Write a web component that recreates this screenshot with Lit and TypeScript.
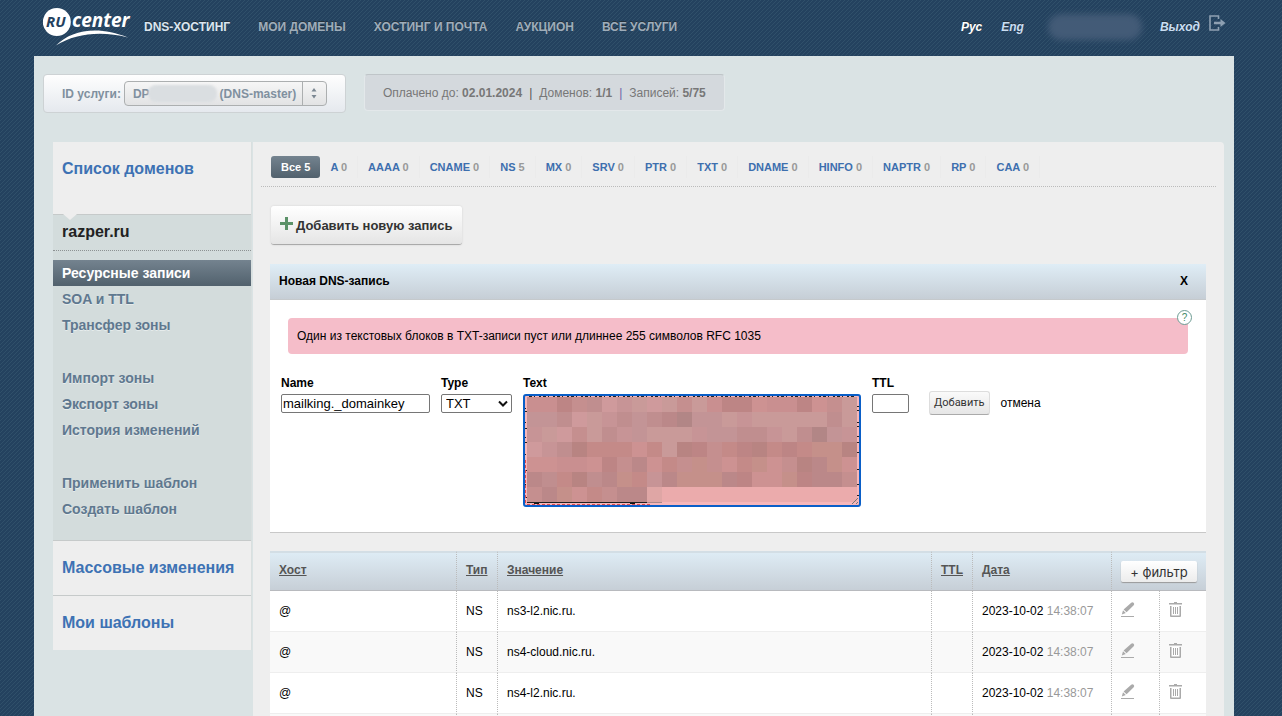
import { LitElement, html, css, svg } from "lit";
import { customElement, state } from "lit/decorators.js";
import { classMap } from "lit/directives/class-map.js";

const NAV = ["DNS-ХОСТИНГ", "МОИ ДОМЕНЫ", "ХОСТИНГ И ПОЧТА", "АУКЦИОН", "ВСЕ УСЛУГИ"];

const TABS: [string, number][] = [
  ["Все", 5], ["A", 0], ["AAAA", 0], ["CNAME", 0], ["NS", 5], ["MX", 0], ["SRV", 0], ["PTR", 0],
  ["TXT", 0], ["DNAME", 0], ["HINFO", 0], ["NAPTR", 0], ["RP", 0], ["CAA", 0],
];

const ZONE_MENU = [
  ["Ресурсные записи", "SOA и TTL", "Трансфер зоны"],
  ["Импорт зоны", "Экспорт зоны", "История изменений"],
  ["Применить шаблон", "Создать шаблон"],
];

const RECORDS = [
  { host: "@", type: "NS", value: "ns3-l2.nic.ru.", date: "2023-10-02", time: "14:38:07" },
  { host: "@", type: "NS", value: "ns4-cloud.nic.ru.", date: "2023-10-02", time: "14:38:07" },
  { host: "@", type: "NS", value: "ns4-l2.nic.ru.", date: "2023-10-02", time: "14:38:07" },
];

// Privacy mosaic over the key: each letter is a tone, each row is 15px high.
const TONES: Record<string, string> = {
  a: "#c98f90", b: "#bd8585", c: "#c58f8f", d: "#c08e8f", e: "#cf9a9c", f: "#c79496",
  g: "#c99a99", h: "#b28686", i: "#c39496", j: "#cd9292", k: "#c48a88", l: "#b88482",
  m: "#c5908a", n: "#dfa6a5", o: "#ebabac", p: "#bb8889",
};
const MOSAIC = [
  "aabcdefgegcgabbjaabjcg",
  "iidegfdidphiigfgggggdg",
  "fgecgdfigggfiiddfgdhif",
  "efdlkkkjkglbckblkbkmml",
  "jjaajbcpjkcmcjkmjclpmj",
  "pdkldpmkfpmmmpbjjmbppc",
  "cpmjkcppnooooooooooooo",
];

@customElement("app-root")
export class AppRoot extends LitElement {
  @state() private tab = "Все";

  static styles = css`
    :host {
      display: block;
      height: 100vh;
      overflow: hidden;
      box-sizing: border-box;
      padding: 0 48px 0 34px;
      font: 12px/16px "Liberation Sans", Arial, sans-serif;
      color: #000;
      background: linear-gradient(135deg, #30506a 12.5%, #24425f 12.5% 50%, #30506a 50% 62.5%, #24425f 62.5%) 0 0 / 4px 4px;
    }
    * { box-sizing: border-box; }
    a { color: inherit; text-decoration: none; }
    button, input, select, textarea { font: inherit; color: inherit; margin: 0; }
    button { border: 0; background: none; padding: 0; cursor: pointer; }

    .header { display: flex; align-items: center; height: 56px; padding: 0 8px 0 9px; }
    .logo { display: block; width: 90px; height: 48px; }
    .nav { display: flex; gap: 28px; margin-left: 11px; padding-bottom: 3px; font-weight: bold; color: #9fadba; text-shadow: 0 -1px 0 #243039; }
    .nav .current { color: #dbe6f0; }
    .user { display: flex; align-items: center; margin-left: auto; padding-bottom: 3px; gap: 19px; font-weight: bold; font-style: italic; color: #c9def2; text-shadow: 0 -1px 0 #243039; }
    .user .current { color: #fff; }
    .user-name { width: 94px; height: 26px; margin: 0 -1px 0 5px; border-radius: 13px; background: #435b77; filter: blur(3px); }
    .exit { display: flex; align-items: center; gap: 9px; }
    .exit-icon { width: 17px; height: 17px; margin-bottom: 6px; }

    .page { display: flex; flex-direction: column; min-height: calc(100vh - 56px); background: #dae3e4; padding: 18px 9px 0; }
    .service { display: flex; align-items: flex-start; gap: 18px; margin-bottom: 29px; }
    .picker { display: flex; align-items: center; gap: 3px; height: 39px; padding: 0 18px; border: 1px solid #cdd2d4; border-radius: 4px; background: linear-gradient(#fefefe, #e5e9ee); font-weight: bold; color: #80909f; }
    .picker-box { position: relative; }
    .picker-select { display: block; appearance: none; width: 203px; height: 25px; padding: 0 8px; border: 1px solid #acafb0; border-radius: 4px; background: linear-gradient(#f6f6f6, #e2e3e4); font-weight: bold; }
    .picker-blur { position: absolute; left: 24px; top: 4px; width: 69px; height: 17px; border-radius: 8px; background: #dadee1; filter: blur(1px); }
    .picker-arrows { position: absolute; right: 1px; top: 1px; width: 24px; height: 23px; pointer-events: none; }
    .info { display: flex; align-items: center; height: 37px; padding: 0 18px; border: 1px solid #e3e8ea; border-top-color: #bfc5c8; border-radius: 4px; background: #d4d9dd; color: #777; }
    .info-sep { margin: 0 7px; color: #555; }
    .info-sep.violet { color: #6a62a8; }

    .columns { flex: 1; display: flex; gap: 1px; padding: 0 1px 0 10px; }
    .side { flex: 0 0 199px; align-self: flex-start; background: #eee; border-right: 1px solid #d9dfdf; }
    .side-head { height: 72px; padding: 17px 9px 0; font: bold 16px/20px "Liberation Sans", Arial, sans-serif; color: #3d72b4; }
    .side-link { display: flex; align-items: center; height: 55px; padding: 0 9px; border-top: 1px solid #c6caca; font: bold 16px/20px "Liberation Sans", Arial, sans-serif; color: #3d72b4; }
    .zone { position: relative; padding-bottom: 18px; border-top: 1px solid #c6caca; background: #d3dcdc; }
    .zone-notch { position: absolute; left: 10px; top: -1px; width: 14px; height: 7px; }
    .zone-name { height: 36px; padding: 7px 9px 0; border-bottom: 1px dotted #8d9293; margin-bottom: 9px; font: bold 16px/20px "Liberation Sans", Arial, sans-serif; color: #222; }
    .zone-group { display: flex; flex-direction: column; margin-bottom: 27px; }
    .zone-group:last-child { margin-bottom: 0; }
    .zone-item { height: 26px; padding: 0 9px; font: bold 14px/26px "Liberation Sans", Arial, sans-serif; color: #5f788f; text-shadow: 0 1px 0 #e6ecec; }
    .zone-item.current { color: #fff; background: linear-gradient(#74838f, #51616d); text-shadow: none; }

    .main { flex: 1; min-width: 0; background: #eee; border-radius: 0 4px 0 0; padding-top: 14px; }
    .tabs { display: flex; margin: 0 8px; padding: 0 0 8px 10px; border-bottom: 1px dotted #bbb; }
    .tab { height: 22px; padding: 0 10px; border-right: 1px solid #ebebeb; font: bold 11px/22px "Liberation Sans", Arial, sans-serif; color: #3d6fae; white-space: pre; }
    .tab-count { color: #999; }
    .tab.current, .tab.current .tab-count { color: #fff; }
    .tab.current { border: 0; border-radius: 3px; background: linear-gradient(#74838f, #51616d); }
    .content { padding: 19px 18px 0 17px; }
    .add { display: flex; align-items: center; gap: 3px; height: 39px; margin-left: 1px; padding: 1px 9px 0; border-radius: 3px; border-bottom: 1px solid #aaa; background: linear-gradient(#fff, #e5e5e5); box-shadow: 0 0 2px #ccc; font: bold 13px/16px "Liberation Sans", Arial, sans-serif; color: #333; }
    .add-icon { width: 13px; height: 13px; margin-bottom: 4px; }

    .card { margin: 19px 0; padding-bottom: 25px; background: #fff; box-shadow: 0 1px 0 #c8c8c8; }
    .card-head { display: flex; align-items: center; justify-content: space-between; height: 36px; padding: 0 18px 2px 9px; border-bottom: 1px solid #c5c9cc; background: linear-gradient(#dfedf6, #c6ced6); font-weight: bold; }
    .card-head h2 { font: inherit; margin: 0; }
    .close { font-weight: bold; }
    .error { position: relative; height: 36px; margin: 18px 18px 22px; padding: 0 9px; border-radius: 4px; background: #f5bdc9; line-height: 36px; }
    .help { position: absolute; right: -5px; top: -9px; width: 17px; height: 17px; }
    .help svg { display: block; }
    .form { display: flex; align-items: flex-start; gap: 11px; padding: 0 11px; }
    .field { display: flex; flex-direction: column; gap: 4px; }
    .field label { font-weight: bold; line-height: 14px; }
    .box { height: 19px; padding: 0 2px; border: 1px solid #767676; border-radius: 2px; background: #fff; font: 13px/17px "Liberation Sans", Arial, sans-serif; outline: 0; }
    .name { width: 149px; padding: 0 1px; }
    .ttl { width: 37px; }
    .type-box { position: relative; }
    .type { display: block; appearance: none; width: 71px; padding: 0 4px; }
    .type-arrow { position: absolute; right: 4px; top: 6px; width: 10px; height: 8px; pointer-events: none; }
    .text-box { position: relative; width: 338px; }
    .text { display: block; width: 100%; height: 113px; border: 2px solid #0a5fc8; border-radius: 3px; background: #f7b7ba; resize: none; outline: 0; font: 13px/15px "Liberation Sans", Arial, sans-serif; }
    .mosaic { position: absolute; left: 2px; top: 2px; width: 334px; height: 109px; pointer-events: none; }
    .actions { display: flex; align-items: center; gap: 11px; margin: 15px 0 0 9px; }
    .submit { height: 24px; padding: 0 4px; border: 1px solid #ddd; border-bottom-color: #aaa; border-radius: 3px; background: linear-gradient(#fafafa, #e6e6e6); font: 11px/20px Roboto, sans-serif; color: #333; }

    .records { width: 100%; table-layout: fixed; border-collapse: separate; border-spacing: 0; background: #fff; }
    .records th { height: 40px; padding: 0 9px 4px; border-top: 2px solid #d3dee5; border-bottom: 1px solid #b8babe; text-align: left; color: #555; }
    .records thead { background: linear-gradient(#dfedf6, #c6ced6); }
    .records th a { text-decoration: underline; }
    .records td { height: 41px; padding: 0 9px; border-bottom: 1px solid #eee; }
    .records tbody tr:nth-child(even), .records tfoot tr { background: #f9f9f9; }
    .records th + th, .records td + td { border-left: 1px dotted #bbb; }
    .c-host { width: 186px; }
    .c-small { width: 41px; }
    .c-date { width: 139px; }
    .c-edit { width: 48px; }
    .c-trash { width: 47px; }
    .time { color: #999; }
    .filter { display: block; height: 21px; width: 76px; margin-top: 4px; border-radius: 2px; background: linear-gradient(#fff, #ececec); box-shadow: 0 1px 1px #999; font: 13px/20px Inter, sans-serif; color: #333; }
    .icon-button { display: block; padding-bottom: 2px; }
    .icon-button svg { display: block; }
  `;

  private logo() {
    return html`<a href="#" aria-label="RU-CENTER"><svg class="logo" viewBox="43 4 90 48">
      <circle cx="56.8" cy="22" r="14" fill="#fff"></circle>
      <text x="46" y="27" font-family="Open Sans, sans-serif" font-weight="700" font-style="italic" font-size="15" fill="#24415e">RU</text>
      <text x="72" y="27" font-family="Open Sans, sans-serif" font-weight="700" font-style="italic" font-size="19" fill="#fff">center</text>
      <path d="M56 45.500C71 30 98 25 128 37.500C101 30.500 75 33.500 56 45.500Z" fill="#fff"></path>
    </svg></a>`;
  }

  private mosaic() {
    const cells = MOSAIC.flatMap((row, y) => [...row].map((t, x) => svg`<rect x=${2 + x * 15} y=${1 + y * 15} width="15" height="15" fill=${TONES[t]}></rect>`));
    const edge = [12, 15, 26, 32, 41, 46, 58, 74, 88, 101];
    return html`<svg class="mosaic" viewBox="0 0 334 109" shape-rendering="crispEdges" aria-hidden="true">
      ${cells}
      <path d="M4 .5H330" stroke="#222" stroke-dasharray="3 2 1 4 2 2"></path>
      ${edge.map((y, i) => svg`<path d=${`M0 ${y}h${1 + (i % 2)}M332 ${y - 2 + (i % 3)}h2v2`} stroke="#222" fill="none"></path>`)}
      <path d="M2 106.500H122" stroke="#222"></path>
      <path d="M122 106.500H137" stroke="#a88"></path>
      <path d="M9 107.500h5M105 107.500h5" stroke="#111"></path>
      <path d="M2 108.500H126M.5 64V108" stroke="#e0484c" stroke-dasharray="3 2"></path>
      <path d="M327 108l6-6M331 108l2-2" stroke="#777"></path>
    </svg>`;
  }

  private pencil() {
    return html`<button class="icon-button" aria-label="Изменить"><svg width="14" height="16" viewBox="0 0 14 16">
      <path d="M10.200.7Q11.500-.3 12.600.8 13.700 2 12.700 3.200L5.600 10.300 2.600 7.500Z M2 8.300 4.800 11 .8 12.400Z M0 14H13V15H0Z" fill="#aaa"></path></svg></button>`;
  }

  private trash() {
    return html`<button class="icon-button" aria-label="Удалить"><svg width="13" height="16" viewBox="0 0 13 16">
      <path d="M5 0H8V1H13V2.500H0V1H5Z M1 4H12V14Q12 15 11 15H2Q1 15 1 14Z" fill="#aaa"></path>
      <path d="M2.500 3.500V13.500H10.500V3.500Z" fill="#fff"></path>
      <path d="M4.500 5V12M6.500 5V12M8.500 5V12" stroke="#aaa" fill="none"></path></svg></button>`;
  }

  render() {
    return html`
      <header class="header">
        ${this.logo()}
        <nav class="nav">${NAV.map((n, i) => html`<a href="#" class=${classMap({ current: i === 0 })}>${n}</a>`)}</nav>
        <div class="user">
          <a href="#" class="current">Рус</a><a href="#">Eng</a>
          <div class="user-name"></div>
          <a href="#" class="exit">Выход<svg class="exit-icon" viewBox="0 0 17 17">
            <path d="M9.500 4V1H1V15H9.500V12" fill="none" stroke="#8ea0b2" stroke-width="1.600"></path>
            <path d="M5 6.700H11.500V4L16.500 8 11.500 12V9.300H5Z" fill="#8ea0b2"></path></svg></a>
        </div>
      </header>
      <div class="page">
        <div class="service">
          <div class="picker">
            <label for="service">ID услуги:</label>
            <div class="picker-box">
              <select id="service" class="picker-select"><option>DP${"\u00a0".repeat(21)}(DNS-master)</option></select>
              <div class="picker-blur"></div>
              <svg class="picker-arrows" viewBox="0 0 24 23">
                <path d="M.5 0V23" stroke="#acafb0"></path>
                <path d="M9.500 9.500H14.500L12 6Z M9.500 13H14.500L12 16.500Z" fill="#7b8792"></path></svg>
            </div>
          </div>
          <div class="info">
            <span>Оплачено до: <b>02.01.2024</b></span><span class="info-sep">|</span>
            <span>Доменов: <b>1/1</b></span><span class="info-sep violet">|</span>
            <span>Записей: <b>5/75</b></span>
          </div>
        </div>
        <div class="columns">
          <aside class="side">
            <div class="side-head"><a href="#">Список доменов</a></div>
            <div class="zone">
              <svg class="zone-notch" viewBox="0 0 14 7"><path d="M0 0H14L7 6Z" fill="#eee"></path></svg>
              <div class="zone-name">razper.ru</div>
              ${ZONE_MENU.map((g, gi) => html`<div class="zone-group">${g.map((m, i) => html`<a href="#" class=${classMap({ "zone-item": true, current: gi + i === 0 })}>${m}</a>`)}</div>`)}
            </div>
            <a href="#" class="side-link">Массовые изменения</a>
            <a href="#" class="side-link">Мои шаблоны</a>
          </aside>
          <main class="main">
            <div class="tabs">
              ${TABS.map(([n, c]) => html`<button class=${classMap({ tab: true, current: n === this.tab })} @click=${() => (this.tab = n)}>${n} <span class="tab-count">${c}</span></button>`)}
            </div>
            <div class="content">
              <button class="add"><svg class="add-icon" viewBox="0 0 13 13"><path d="M6.500 0V13M0 6.500H13" stroke="#5b9168" stroke-width="3"></path></svg>Добавить новую запись</button>
              <section class="card">
                <div class="card-head"><h2>Новая DNS-запись</h2><button class="close">X</button></div>
                <div class="error">Один из текстовых блоков в TXT-записи пуст или длиннее 255 символов RFC 1035
                  <button class="help" aria-label="Помощь"><svg width="17" height="17" viewBox="0 0 17 17"><circle cx="8.500" cy="8.500" r="7" fill="#fff" stroke="#6d9c93"></circle><text x="8.500" y="12" text-anchor="middle" font-size="10" font-family="Liberation Sans" fill="#458d68">?</text></svg></button>
                </div>
                <form class="form">
                  <div class="field"><label for="name">Name</label><input id="name" class="box name" .value=${"mailking._domainkey"} /></div>
                  <div class="field"><label for="type">Type</label><div class="type-box">
                    <select id="type" class="box type"><option>TXT</option></select>
                    <svg class="type-arrow" viewBox="0 0 10 8"><path d="M1 1.500 5 5.500 9 1.500" fill="none" stroke="#111" stroke-width="2"></path></svg></div></div>
                  <div class="field"><label for="text">Text</label><div class="text-box"><textarea id="text" class="text"></textarea>${this.mosaic()}</div></div>
                  <div class="field"><label for="ttl">TTL</label><input id="ttl" class="box ttl" /></div>
                  <div class="actions"><button type="button" class="submit">Добавить</button><button type="button">отмена</button></div>
                </form>
              </section>
              <table class="records">
                <colgroup><col class="c-host" /><col class="c-small" /><col /><col class="c-small" /><col class="c-date" /><col class="c-edit" /><col class="c-trash" /></colgroup>
                <thead><tr>
                  ${["Хост", "Тип", "Значение", "TTL", "Дата"].map((h) => html`<th><a href="#">${h}</a></th>`)}
                  <th colspan="2"><button class="filter">+ фильтр</button></th>
                </tr></thead>
                <tbody>${RECORDS.map((r) => html`<tr>
                  <td>${r.host}</td><td>${r.type}</td><td>${r.value}</td><td></td>
                  <td>${r.date} <span class="time">${r.time}</span></td>
                  <td>${this.pencil()}</td><td>${this.trash()}</td></tr>`)}</tbody>
                <tfoot><tr><td></td><td></td><td></td><td></td><td></td><td></td><td></td></tr></tfoot>
              </table>
            </div>
          </main>
        </div>
      </div>`;
  }
}
